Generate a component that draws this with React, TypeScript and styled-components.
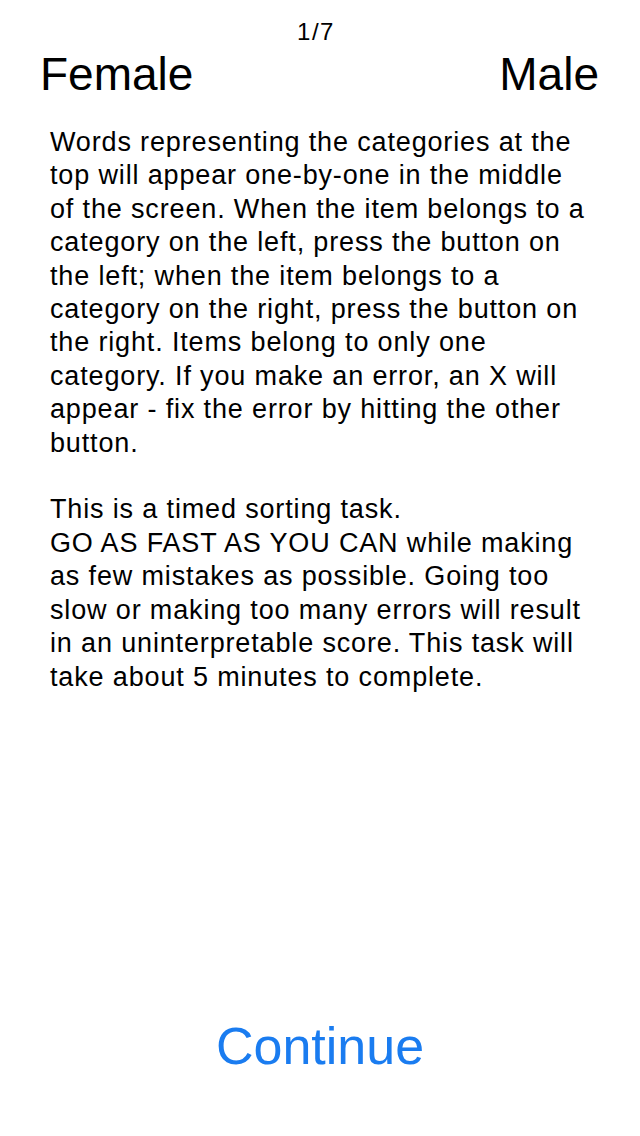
import React from "react";
import styled, { createGlobalStyle } from "styled-components";

const Global = createGlobalStyle`
  html, body { margin: 0; padding: 0; background: #ffffff; }
  body { font-family: "Liberation Sans", Arial, sans-serif; color: #000; }
`;

const Screen = styled.div`
  width: 640px;
  height: 1136px;
  display: flex;
  flex-direction: column;
  box-sizing: border-box;
`;

const Counter = styled.div`
  text-align: center;
  font-size: 24px;
  line-height: 28px;
  letter-spacing: 1.5px;
  padding: 18px 8px 0 0;
`;

const CategoryRow = styled.div`
  display: flex;
  justify-content: space-between;
  padding: 0 41px 0 40px;
`;

const Category = styled.div`
  font-size: 46px;
  line-height: 56px;
`;

const Instructions = styled.div`
  padding: 24px 48px 0 50px;
  font-size: 27px;
  line-height: 33.4px;
  letter-spacing: 0.85px;
  white-space: pre-line;
`;

const Spacer = styled.div`
  flex: 1;
`;

const ContinueButton = styled.button`
  align-self: center;
  background: none;
  border: none;
  font-family: "Liberation Sans", Arial, sans-serif;
  font-size: 52px;
  line-height: 60px;
  color: #1a7cf0;
  padding: 0;
  margin-bottom: 60px;
  cursor: pointer;
`;

const text = `Words representing the categories at the top will appear one-by-one in the middle of the screen. When the item belongs to a category on the left, press the button on the left; when the item belongs to a category on the right, press the button on the right. Items belong to only one category. If you make an error, an X will appear - fix the error by hitting the other button.

This is a timed sorting task.
GO AS FAST AS YOU CAN while making as few mistakes as possible. Going too slow or making too many errors will result in an uninterpretable score. This task will take about 5 minutes to complete.`;

export default function App() {
  return (
    <>
      <Global />
      <Screen>
        <Counter>1/7</Counter>
        <CategoryRow>
          <Category>Female</Category>
          <Category>Male</Category>
        </CategoryRow>
        <Instructions>{text}</Instructions>
        <Spacer />
        <ContinueButton>Continue</ContinueButton>
      </Screen>
    </>
  );
}
